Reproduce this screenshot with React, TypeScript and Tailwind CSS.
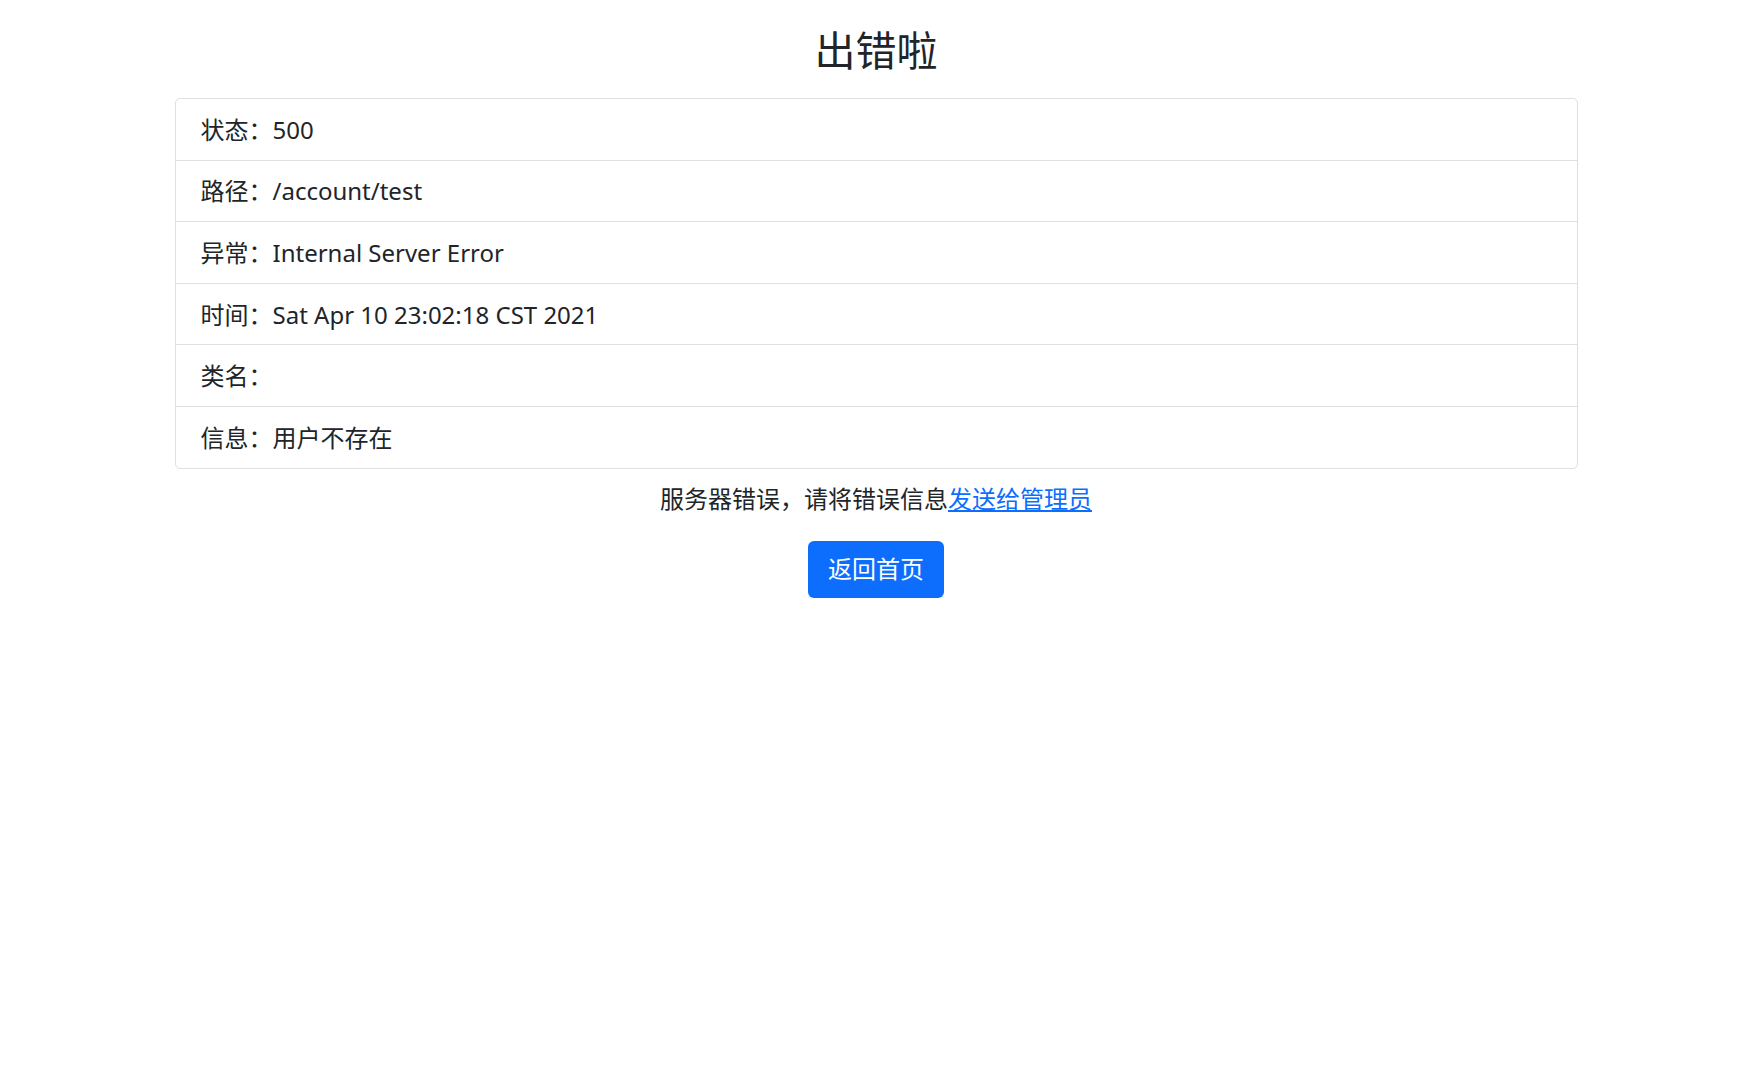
const rows: { label: string; value: string }[] = [
  { label: "状态", value: "500" },
  { label: "路径", value: "/account/test" },
  { label: "异常", value: "Internal Server Error" },
  { label: "时间", value: "Sat Apr 10 23:02:18 CST 2021" },
  { label: "类名", value: "" },
  { label: "信息", value: "用户不存在" },
];

export default function App() {
  return (
    <div
      className="min-h-screen bg-white text-[#212529]"
      style={{ fontFamily: '"Noto Sans", "Noto Sans CJK SC", sans-serif' }}
    >
      <div className="flex flex-col items-center">
        <h2 className="mt-[25px] text-[41px] leading-[50px] font-normal">出错啦</h2>

        <ul className="mt-[23px] w-[1403px] rounded-[5px] border border-[#dfdfdf]">
          {rows.map((row, i) => (
            <li
              key={row.label}
              className={`px-[25px] py-[12.8px] text-[24px] leading-[35px] ${
                i > 0 ? "border-t border-[#dfdfdf]" : ""
              }`}
            >
              {row.label}：{row.value}
            </li>
          ))}
        </ul>

        <p className="mt-[12px] text-[24px] leading-[36px]">
          服务器错误，请将错误信息
          <a href="#" className="text-[#0d6efd] underline">
            发送给管理员
          </a>
        </p>

        <button className="mt-[24px] h-[57px] rounded-[6px] bg-[#0d6efd] px-[20px] text-[24px] text-white">
          返回首页
        </button>
      </div>
    </div>
  );
}
